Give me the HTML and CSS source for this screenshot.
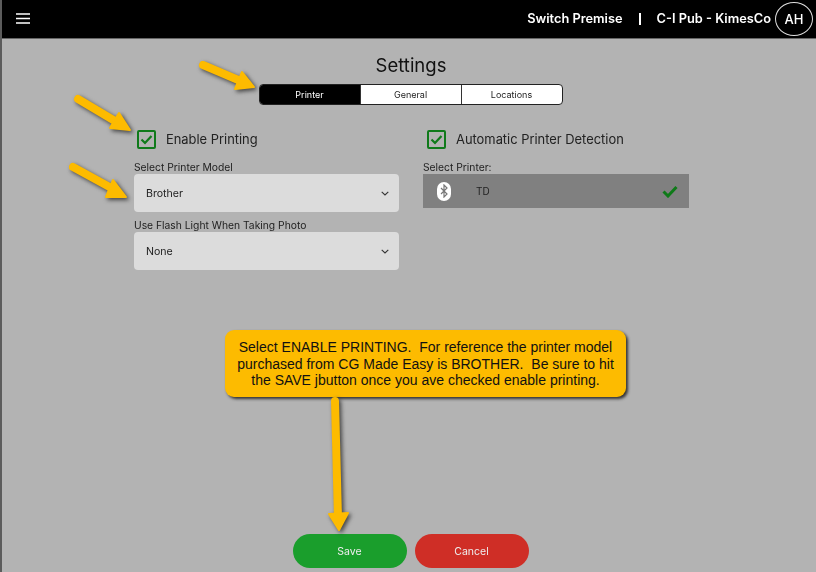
FILE: index.html
```html
<!DOCTYPE html>
<html lang="en">
<head>
<meta charset="utf-8">
<title>Settings</title>
<link rel="stylesheet" href="styles.css">
</head>
<body>
<div class="page">
  <header class="topbar">
    <svg class="menu-icon" width="14" height="11" viewBox="0 0 14 11"><path d="M0 1h14M0 5.5h14M0 10h14" stroke="#fff" stroke-width="1.6" fill="none"/></svg>
    <div class="topbar-right">
      <span class="switch">Switch Premise</span>
      <span class="divider"></span>
      <span class="premise">C-I Pub - KimesCo</span>
      <span class="avatar">AH</span>
    </div>
  </header>
  <main class="content">
    <h1 class="title">Settings</h1>
    <nav class="tabs">
      <span class="tab tab-active">Printer</span>
      <span class="tab">General</span>
      <span class="tab">Locations</span>
    </nav>
    <div class="form">
      <section class="column">
        <div class="check-row">
          <span class="checkbox"><svg width="13" height="11" viewBox="0 0 13 11"><path d="M1.5 5.5l3.5 3.5 6.5-7" stroke="#0f7a1a" stroke-width="2.2" fill="none"/></svg></span>
          <span class="check-label">Enable Printing</span>
        </div>
        <label class="field-label">Select Printer Model</label>
        <div class="select"><span>Brother</span><svg width="8" height="5" viewBox="0 0 8 5"><path d="M.7.8L4 4l3.3-3.2" stroke="#333" stroke-width="1.1" fill="none"/></svg></div>
        <label class="field-label field-label-second">Use Flash Light When Taking Photo</label>
        <div class="select"><span>None</span><svg width="8" height="5" viewBox="0 0 8 5"><path d="M.7.8L4 4l3.3-3.2" stroke="#333" stroke-width="1.1" fill="none"/></svg></div>
      </section>
      <section class="column column-right">
        <div class="check-row">
          <span class="checkbox"><svg width="13" height="11" viewBox="0 0 13 11"><path d="M1.5 5.5l3.5 3.5 6.5-7" stroke="#0f7a1a" stroke-width="2.2" fill="none"/></svg></span>
          <span class="check-label">Automatic Printer Detection</span>
        </div>
        <label class="field-label">Select Printer:</label>
        <div class="printer-row">
          <span class="bt-pill"><svg width="8" height="14" viewBox="0 0 8 14"><path d="M1 4l6 6-3 3V1l3 3-6 6" stroke="#777" stroke-width="1.2" fill="none"/></svg></span>
          <span class="printer-name">TD</span>
          <svg class="printer-check" width="16" height="13" viewBox="0 0 16 13"><path d="M1.5 6.5l4.5 4.5L14.5 2" stroke="#0e7a18" stroke-width="3" fill="none"/></svg>
        </div>
      </section>
    </div>
    <div class="actions">
      <button class="btn btn-save">Save</button>
      <button class="btn btn-cancel">Cancel</button>
    </div>
  </main>
  <div class="callout">Select ENABLE PRINTING.&nbsp; For reference the printer model purchased from CG Made Easy is BROTHER.&nbsp; Be sure to hit the SAVE jbutton once you ave checked enable printing.</div>
  <svg class="annotations" width="816" height="572" viewBox="0 0 816 572">
    <g fill="#fdbb00" stroke="#fdbb00" stroke-linecap="round" stroke-linejoin="round">
      <path d="M203 65L243 82" stroke-width="8" fill="none"/>
      <path d="M254 87L242 72L235 89Z" stroke-width="2"/>
      <path d="M78 99L120 124" stroke-width="8" fill="none"/>
      <path d="M130 130L119 113L110 128Z" stroke-width="2"/>
      <path d="M73 167L115 190" stroke-width="8" fill="none"/>
      <path d="M126 197L113 180L106 197Z" stroke-width="2"/>
      <path d="M335 401L338 518" stroke-width="8" fill="none"/>
      <path d="M339 530L329 514L348 513Z" stroke-width="2"/>
    </g>
  </svg>
</div>
</body>
</html>
```
FILE: styles.css
```css
* { box-sizing: border-box; }
html, body { margin: 0; padding: 0; }
body { width: 816px; height: 572px; overflow: hidden; font-family: Inter, "Liberation Sans", sans-serif; }
.page { position: relative; width: 816px; height: 572px; display: flex; flex-direction: column; background: #b3b3b3; border-left: 2px solid #5c5c5c; }
.topbar { height: 39px; flex: none; background: #000; border-bottom: 1px solid #666; display: flex; align-items: center; justify-content: space-between; padding: 0 3px 1px 14px; color: #fff; filter: blur(.3px); }
.menu-icon { display: block; }
.topbar-right { display: flex; align-items: center; font-size: 12.8px; font-weight: 600; }
.divider { width: 2px; height: 12px; background: #fff; margin: 0 16px; }
.avatar { width: 38px; height: 34px; margin-left: 4px; border: 1px solid #ddd; border-radius: 50%; display: flex; align-items: center; justify-content: center; font-weight: 500; font-size: 13px; }
.content { flex: 1; display: flex; flex-direction: column; align-items: center; filter: blur(.3px); }
.title { margin: 15px 0 0 4px; font-size: 18.5px; line-height: 22px; font-weight: 400; color: #111; }
.tabs { margin-top: 8px; margin-left: 3px; width: 304px; height: 21px; display: flex; border: 1px solid #222; border-radius: 4px; overflow: hidden; background: #fff; }
.tab { flex: 1; display: flex; align-items: center; justify-content: center; font-size: 9px; color: #222; border-left: 1px solid #333; }
.tab:first-child { border-left: 0; }
.tab-active { background: #000; color: #fff; }
.form { align-self: flex-start; display: flex; gap: 24px; margin-top: 24px; padding-left: 132px; }
.column { width: 265px; display: flex; flex-direction: column; }
.column-right { width: 266px; }
.check-row { display: flex; align-items: center; height: 20px; padding-left: 3px; }
.column-right .check-row { padding-left: 4px; }
.checkbox { width: 19px; height: 19px; border: 2px solid #0f7a1a; border-radius: 2px; display: flex; align-items: center; justify-content: center; }
.check-label { margin-left: 10px; font-size: 12.9px; color: #222; }
.field-label { margin-top: 12px; font-size: 10.3px; line-height: 13px; color: #222; }
.field-label-second { margin-top: 7px; }
.select { height: 38px; background: #dcdcdc; border-radius: 4px; display: flex; align-items: center; justify-content: space-between; padding: 0 10px 0 12px; font-size: 10.6px; color: #222; }
.printer-row { height: 34px; background: #808080; display: flex; align-items: center; padding: 0 11px 0 14px; font-size: 10px; color: #222; }
.bt-pill { width: 14px; height: 19px; background: #fff; border-radius: 7px; display: flex; align-items: center; justify-content: center; }
.printer-name { margin-left: 25px; flex: 1; }
.printer-check { display: block; }
.actions { margin-top: auto; margin-bottom: 4px; margin-left: 3px; display: flex; gap: 8px; }
.btn { width: 114px; height: 34px; border: 0; border-radius: 17px; font-family: inherit; font-size: 10.5px; color: #eee; padding: 0; }
.btn-save { background: #1a9e2c; }
.btn-cancel { background: #cf2e26; }
.callout { position: absolute; left: 223px; top: 330px; width: 401px; height: 67px; padding: 9px 10px 0; background: #fdbb00; border-radius: 9px; box-shadow: 2px 2px 3px #333; font-family: "Liberation Sans", sans-serif; font-size: 14px; line-height: 16.5px; color: #111; text-align: center; }
.annotations { position: absolute; left: -2px; top: 0; filter: drop-shadow(2px 2px 2px rgba(30,30,30,.75)); pointer-events: none; }
```
